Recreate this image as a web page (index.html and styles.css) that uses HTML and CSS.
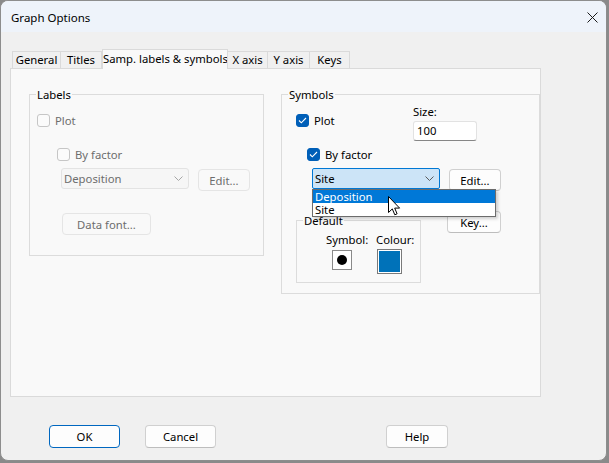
FILE: index.html
```html
<!DOCTYPE html>
<html>
<head>
<meta charset="utf-8">
<title>Graph Options</title>
<link rel="stylesheet" href="styles.css">
</head>
<body>
<div class="window">
  <div class="titlebar">
    <span class="title">Graph Options</span>
    <svg class="close" width="11" height="11" viewBox="0 0 11 11"><path d="M0.5 0.5L10.5 10.5M10.5 0.5L0.5 10.5" stroke="#1a1a1a" stroke-width="1" fill="none"/></svg>
  </div>
  <div class="content">
    <div class="tabs">
      <div class="tab t-general">General</div>
      <div class="tab t-titles">Titles</div>
      <div class="tab t-samp active">Samp. labels &amp; symbols</div>
      <div class="tab t-x">X axis</div>
      <div class="tab t-y">Y axis</div>
      <div class="tab t-keys">Keys</div>
    </div>
    <div class="panel">
      <fieldset class="group labels">
        <legend>Labels</legend>
        <div class="check disabled l-plot"><span class="cb"></span><span>Plot</span></div>
        <div class="check disabled l-by"><span class="cb"></span><span>By factor</span></div>
        <div class="combo-row l-combo">
          <div class="combo disabled"><span>Deposition</span>
            <svg class="chev" width="9" height="5" viewBox="0 0 9 5"><path d="M0.5 0.5L4.5 4.5L8.5 0.5" stroke="#a6a6a6" fill="none"/></svg>
          </div>
          <div class="btn disabled edit">Edit...</div>
        </div>
        <div class="btn disabled datafont">Data font...</div>
      </fieldset>

      <fieldset class="group symbols">
        <legend>Symbols</legend>
        <div class="s-row1">
          <div class="check s-plot"><span class="cb checked"><svg width="9" height="7" viewBox="0 0 9 7"><path d="M1 3.5L3.3 5.8L8 1" stroke="#fff" stroke-width="1.1" fill="none"/></svg></span><span>Plot</span></div>
          <div class="size">
            <div class="size-label">Size:</div>
            <div class="input">100</div>
          </div>
        </div>
        <div class="check s-by"><span class="cb checked"><svg width="9" height="7" viewBox="0 0 9 7"><path d="M1 3.5L3.3 5.8L8 1" stroke="#fff" stroke-width="1.1" fill="none"/></svg></span><span>By factor</span></div>
        <div class="combo-row s-combo">
          <div class="combo open"><span>Site</span>
            <svg class="chev" width="9" height="5" viewBox="0 0 9 5"><path d="M0.5 0.5L4.5 4.5L8.5 0.5" stroke="#5a5a5a" fill="none"/></svg>
            <div class="droplist">
              <div class="item selected">Deposition</div>
              <div class="item">Site</div>
            </div>
            <svg class="cursor" width="13" height="20" viewBox="0 0 13 20"><path d="M0.5 0.5L0.5 16.5L4.3 12.9L6.8 18.8L9.1 17.8L6.7 12.1L11.6 12.1Z" fill="#fff" stroke="#000" stroke-width="1" stroke-linejoin="round"/></svg>
          </div>
          <div class="btn edit">Edit...</div>
        </div>
        <div class="s-row4">
          <fieldset class="group default">
            <legend>Default</legend>
            <div class="swatches">
              <div class="sw-col sym">
                <div class="sw-label">Symbol:</div>
                <div class="symbox"><span class="dot"></span></div>
              </div>
              <div class="sw-col col">
                <div class="sw-label">Colour:</div>
                <div class="colbox"><span class="fill"></span></div>
              </div>
            </div>
          </fieldset>
          <div class="btn key">Key...</div>
        </div>
      </fieldset>
    </div>
    <div class="buttons">
      <div class="btn dlg ok">OK</div>
      <div class="btn dlg cancel">Cancel</div>
      <div class="btn dlg help">Help</div>
    </div>
  </div>
</div>
</body>
</html>
```

FILE: styles.css
```css
* { box-sizing: border-box; }
html, body { margin: 0; padding: 0; }
body {
  background: #8a8a8a;
  width: 609px;
  height: 463px;
  overflow: hidden;
  font-family: "Noto Sans", "Liberation Sans", sans-serif;
  font-size: 11.3px;
  color: #000;
}
.window {
  width: 607px;
  height: 461px;
  background: #f0f0f0;
  border: 1px solid #8d8d8d;
  border-radius: 8px;
  overflow: hidden;
  display: flex;
  flex-direction: column;
}
.titlebar {
  height: 31px;
  flex: none;
  background: #eef3fa;
  display: flex;
  align-items: center;
  padding-left: 10px;
}
.title { flex: 1; padding-top: 1px; font-size: 11.5px; }
.close { margin-right: 8px; margin-top: 1px; }

.content { flex: 1; padding: 17px 0 0 9px; }

.tabs {
  display: flex;
  align-items: flex-end;
  height: 20px;
  margin-left: 2px;
  margin-bottom: -1px;
  position: relative;
  z-index: 2;
}
.tab {
  height: 17px;
  margin-bottom: 1px;
  border: 1px solid #dadada;
  border-bottom: none;
  background: #f0f0f0;
  text-align: center;
  line-height: 16px;
  white-space: nowrap;
  margin-left: -1px;
}
.t-general { width: 49px; margin-left: 0; }
.t-titles { width: 42px; }
.t-samp { width: 126px; margin-left: 0; }
.t-x { width: 41px; }
.t-y { width: 43px; }
.t-keys { width: 41px; }
.tab.active {
  height: 20px;
  margin-bottom: 0;
  background: #f9f9f9;
  line-height: 17px;
}

.panel {
  width: 531px;
  height: 329px;
  border: 1px solid #dadada;
  background: #f9f9f9;
  display: grid;
  grid-template-columns: 235px 259px;
  column-gap: 17px;
  align-items: start;
  padding: 18px 0 0 18px;
  position: relative;
  z-index: 1;
}

.group {
  margin: 0;
  padding: 0;
  border: 1px solid #dcdcdc;
  min-width: 0;
}
.group legend {
  padding: 0 1px;
  margin-left: 6px;
  line-height: 15px;
  height: 15px;
}
.labels { height: 169px; }
.symbols { height: 207px; }

.check {
  display: flex;
  align-items: center;
  gap: 5px;
  height: 13px;
  line-height: 13px;
}
.cb {
  width: 13px;
  height: 13px;
  flex: none;
  border: 1px solid #c6c6c6;
  border-radius: 3px;
  background: #fbfbfb;
  display: flex;
  align-items: center;
  justify-content: center;
}
.cb.checked { background: #005fb8; border-color: #005fb8; }
.check.disabled { color: #6d6d6d; }

.l-plot { margin: 12px 0 0 7px; }
.l-by { margin: 21px 0 0 27px; }
.l-combo { margin: 7px 0 0 31px; }
.datafont { margin: 22px 0 0 32px; width: 89px; }

.combo-row { display: flex; align-items: flex-start; }
.combo {
  width: 128px;
  height: 21px;
  border: 1px solid #e3e3e3;
  border-radius: 3px;
  background: #f9f9f9;
  display: flex;
  align-items: center;
  justify-content: space-between;
  padding: 0 5px 0 2px;
  position: relative;
}
.combo.disabled { color: #6d6d6d; background: #f6f6f6; }
.combo.open {
  background: #cce4f7;
  border-color: #0078d4;
  border-radius: 2px;
}
.chev { flex: none; }

.btn {
  height: 22px;
  border: 1px solid #d0d0d0;
  border-bottom-color: #bdbdbd;
  border-radius: 4px;
  background: #fdfdfd;
  display: flex;
  align-items: center;
  justify-content: center;
  white-space: nowrap;
}
.btn.disabled {
  background: #f9f9f9;
  border-color: #e5e5e5;
  color: #6d6d6d;
}
.edit { width: 52px; margin: 1px 0 0 9px; }

.s-row1 { display: flex; align-items: flex-start; }
.s-plot { margin: 12px 0 0 14px; }
.size { margin: 2px 62px 0 auto; width: 64px; }
.size-label { height: 17px; line-height: 16px; }
.input {
  height: 20px;
  border: 1px solid #e2e2e2;
  border-bottom-color: #868686;
  border-radius: 3px;
  background: #fff;
  line-height: 18px;
  padding-left: 3px;
}
.s-by { margin: 7px 0 0 25px; }
.s-combo { margin: 7px 0 0 30px; }

.droplist {
  position: absolute;
  left: -1px;
  top: 20px;
  width: 184px;
  height: 28px;
  border: 1px solid #6c6c6c;
  background: #fff;
  box-shadow: 2px 2px 3px rgba(0,0,0,0.18);
  z-index: 5;
}
.item { height: 13px; line-height: 13px; padding-left: 2px; }
.item.selected { background: #0078d7; color: #fff; }
.cursor { position: absolute; left: 75px; top: 27px; z-index: 6; }

.s-row4 { display: flex; align-items: flex-start; }
.default { width: 125px; height: 70px; margin: 22px 0 0 14px; }
.key { width: 54px; margin: 20px 0 0 26px; }

.swatches { display: flex; }
.sw-col { display: flex; flex-direction: column; }
.sw-col.sym { width: 79px; padding-left: 29px; }
.sw-label { height: 16px; line-height: 16px; margin-top: 4px; white-space: nowrap; }
.symbox {
  width: 20px;
  height: 20px;
  margin: 2px 0 0 6px;
  border: 1px solid #8a8a8a;
  background: #fff;
  display: flex;
  align-items: center;
  justify-content: center;
}
.dot { width: 10px; height: 10px; border-radius: 50%; background: #000; }
.colbox {
  width: 25px;
  height: 25px;
  margin: 1px 0 0 1px;
  border: 1px solid #7a7a7a;
  padding: 1px;
  background: #fff;
}
.fill { display: block; width: 100%; height: 100%; background: #0072b9; }

.buttons { display: flex; margin: 28px 0 0 39px; }
.dlg { width: 71px; height: 23px; }
.ok { border: 1px solid #0067c0; }
.cancel { margin-left: 25px; }
.help { width: 62px; margin-left: 170px; }
```
